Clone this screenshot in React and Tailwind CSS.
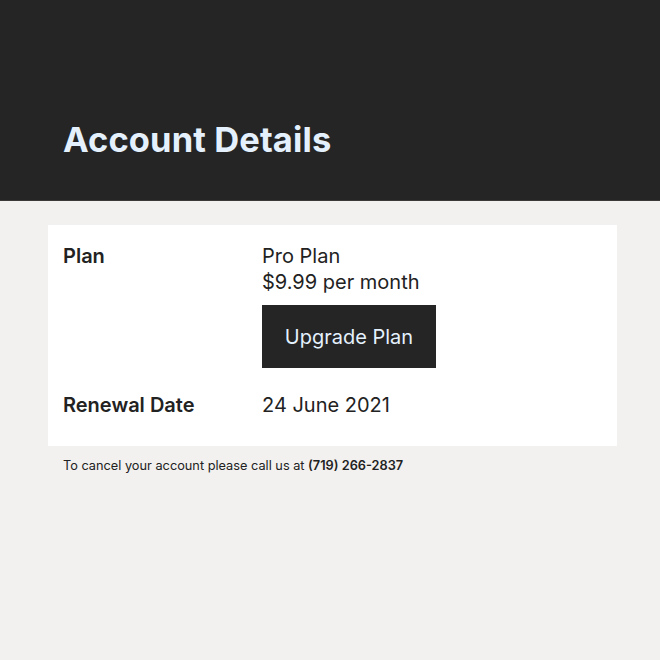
import React from 'react';

export default function App() {
  return (
    <div className="min-h-[660px] bg-[#f2f1ef] font-['Inter',sans-serif] text-[#222]">
      <header className="h-[201px] bg-[#252525] border-b border-[#3a3a3a] px-[63px] pt-[118px]">
        <h1 className="text-[34.5px] leading-[44px] font-bold text-[#e4f1fd] tracking-[0.1px]">Account Details</h1>
      </header>

      <main className="px-[48px] pt-[24px]">
        <section className="w-[569px] bg-white px-[15px] pt-[18px] pb-[28px]">
          <div className="grid grid-cols-[199px_1fr] text-[20px] leading-[26px]">
            <div className="font-semibold">Plan</div>
            <div>
              <div>Pro Plan</div>
              <div>$9.99 per month</div>
              <button className="mt-[10px] w-[174px] h-[63px] bg-[#252525] text-[#e4f1fd] text-[20px]">
                Upgrade Plan
              </button>
            </div>
            <div className="font-semibold mt-[24px]">Renewal Date</div>
            <div className="mt-[24px]">24 June 2021</div>
          </div>
        </section>
        <p className="px-[15px] mt-[11px] text-[12.75px] leading-[18px]">
          To cancel your account please call us at <span className="font-semibold">(719) 266-2837</span>
        </p>
      </main>
    </div>
  );
}
